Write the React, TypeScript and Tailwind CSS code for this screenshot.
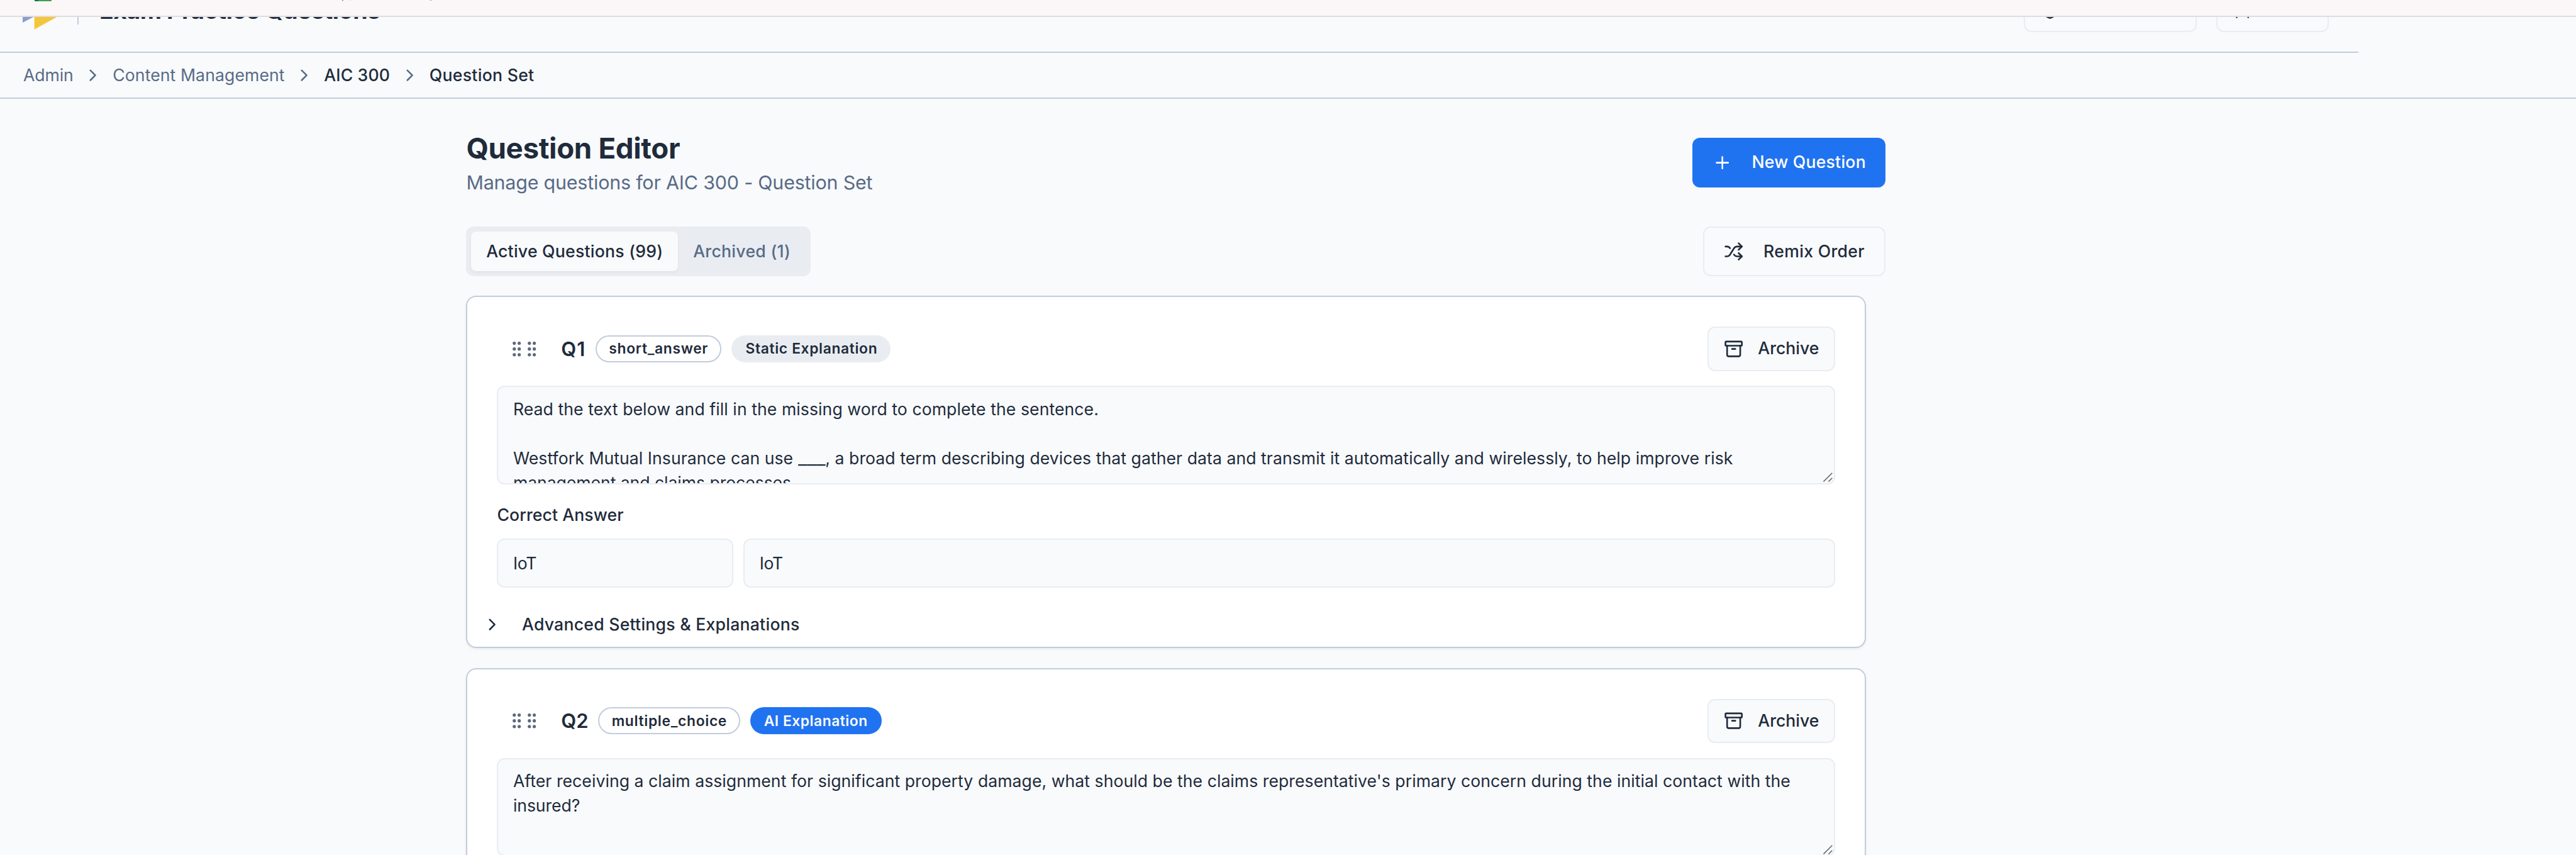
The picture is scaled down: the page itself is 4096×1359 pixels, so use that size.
import React from 'react';
import type { ReactNode } from 'react';
import { Archive, ChevronRight, GripVertical, Plus, Shield, Shuffle, User } from 'lucide-react';

const ICON = 'size-[31.3px] shrink-0';
const FIELD = 'rounded-[12px] border-2 border-[#e9ecf1] bg-[#f8fafc]';

function BrowserEdge() {
  return (
    <div className="flex h-[27px] shrink-0 items-start border-b-2 border-[#dfdcdf] bg-[#fbf7f8] pl-[55px]">
      <span className="h-[2px] w-[6px] bg-[#23713a]" />
      <span className="h-[2px] w-[20px] bg-[#37a152]" />
      <span className="h-[2px] w-px bg-[#e2574c]" />
      <span className="ml-[462px] h-px w-[2px] bg-[#6b6b6b]" />
      <span className="ml-[10px] h-px w-[5px] bg-[#ebe7e8]" />
      <span className="ml-[123px] h-px w-[2px] bg-[#e0795c]" />
    </div>
  );
}

function Header() {
  return (
    <div className="flex h-[57px] shrink-0 flex-col justify-end overflow-hidden">
      <header className="flex h-[135.2px] w-[3750px] shrink-0 items-center border-b-2 border-[#c2cddc] pr-[47px] pl-[36px]">
        <svg className="h-[62.7px] w-[76.4px]" viewBox="0 0 78 64">
          <path d="M0 11v42l40-21z" fill="#8c9dcd" />
          <path d="M19 0v64l58-32z" fill="#f4c63b" />
        </svg>
        <span className="ml-[11px] h-[47px] w-[2px] bg-[#c2cddc]" />
        <span className="mt-[2px] ml-[32.5px] text-[37.5px] leading-none font-bold tracking-[-0.42px] whitespace-nowrap">
          Exam Practice Questions
        </span>
        <div className="ml-auto flex gap-[31.3px]">
          <button className={`flex h-[70.5px] w-[274.4px] items-center pl-[23.5px] ${FIELD}`}>
            <Shield className={ICON} />
          </button>
          <button className={`flex h-[70.5px] w-[179px] items-center pl-[23.5px] ${FIELD}`}>
            <User className={ICON} />
          </button>
        </div>
      </header>
    </div>
  );
}

function Breadcrumbs() {
  return (
    <nav className="flex h-[73px] shrink-0 items-center gap-[15.7px] border-b-2 border-[#c2cddc] pl-[37px] text-[26.6px] whitespace-nowrap text-[#586b86]">
      <span className="tracking-[-0.1px]">Admin</span>
      <ChevronRight className={ICON} />
      <span className="tracking-[0.1px]">Content Management</span>
      <ChevronRight className={ICON} />
      <span className="font-medium tracking-[0.15px] text-[#1f2b3b]">AIC 300</span>
      <ChevronRight className={ICON} />
      <span className="font-medium tracking-[0.3px] text-[#1f2b3b]">Question Set</span>
    </nav>
  );
}

function PageTitle() {
  return (
    <div className="flex items-center justify-between">
      <div>
        <h1 className="-mb-px text-[45.6px] leading-[64.7px] font-bold tracking-[-0.3px]">Question Editor</h1>
        <p className="text-[30.4px] leading-[47px] tracking-[-0.18px] text-[#586b86]">
          Manage questions for AIC 300 - Question Set
        </p>
      </div>
      <button className="mb-[1px] flex h-[78.4px] w-[306.6px] items-center gap-[31.3px] rounded-[12px] bg-[#2073f0] pl-[31.3px] font-medium tracking-[0.24px] whitespace-nowrap text-white">
        <Plus className={ICON} />
        New Question
      </button>
    </div>
  );
}

function Tabs() {
  return (
    <div className="mt-[46.2px] flex items-center justify-between font-medium whitespace-nowrap">
      <div className="flex h-[78.4px] w-[547.5px] rounded-[12px] bg-[#e9edf2] p-[7.8px]">
        <button className="w-[329.1px] rounded-[8px] bg-[#f8fafc] tracking-[0.25px] shadow-[0_2px_4px_rgba(0,0,0,0.05)]">
          Active Questions (99)
        </button>
        <button className="grow tracking-[0.3px] text-[#586b86]">Archived (1)</button>
      </div>
      <button className={`flex h-[78.4px] w-[289.9px] items-center gap-[31.3px] pl-[31.3px] tracking-[0.32px] ${FIELD}`}>
        <Shuffle className={ICON} />
        Remix Order
      </button>
    </div>
  );
}

function ResizeHandle() {
  return (
    <svg className="absolute right-[1.5px] bottom-[1.5px] size-[15px]" viewBox="0 0 15 15" fill="none" stroke="#666a6c" strokeWidth="1.6">
      <path d="M0.5 14.5 14.3 0.7M8.5 14.5l5.8-5.8" />
    </svg>
  );
}

type Line = { key: string; text: ReactNode; tracking: string };

type Question = {
  label: string;
  labelClass: string;
  type: string;
  typeClass: string;
  explanation: string;
  explanationClass: string;
  lines: Line[];
};

const questions: Question[] = [
  {
    label: 'Q1',
    labelClass: 'w-[39.2px] tracking-[1px]',
    type: 'short_answer',
    typeClass: 'w-[200.3px] tracking-[0.7px]',
    explanation: 'Static Explanation',
    explanationClass: 'w-[252.7px] pl-[2px] bg-[#e9edf2] tracking-[0.65px]',
    lines: [
      {
        key: 'a',
        text: 'Read the text below and fill in the missing word to complete the sentence.',
        tracking: 'tracking-[0.08px]',
      },
      { key: 'b', text: ' ', tracking: '' },
      {
        key: 'c',
        text: (
          <>
            Westfork Mutual Insurance can use{' '}
            <span className="mr-[7.2px] inline-block origin-left scale-x-[1.2] tracking-normal">___</span>, a broad term
            describing devices that gather data and transmit it automatically and wirelessly, to help improve risk
          </>
        ),
        tracking: 'tracking-[0.06px]',
      },
      { key: 'd', text: 'management and claims processes.', tracking: 'tracking-[-0.05px]' },
    ],
  },
  {
    label: 'Q2',
    labelClass: 'w-[43.6px] tracking-[0.15px]',
    type: 'multiple_choice',
    typeClass: 'w-[225.8px] tracking-[0.69px]',
    explanation: 'AI Explanation',
    explanationClass: 'w-[208.6px] bg-[#2073f0] text-[#f8fafc] tracking-[0.53px]',
    lines: [
      {
        key: 'a',
        text: "After receiving a claim assignment for significant property damage, what should be the claims representative's primary concern during the initial contact with the",
        tracking: 'tracking-[0.053px]',
      },
      { key: 'b', text: 'insured?', tracking: 'tracking-[-0.07px]' },
    ],
  },
];

function QuestionCard({ question }: { question: Question }) {
  return (
    <section className="h-[560.2px] w-[2225.3px] shrink-0 rounded-[16px] border-2 border-[#c2cddc] bg-white shadow-[0_2px_4px_rgba(0,0,0,0.06)]">
      <div className="px-[47px] pt-[47px]">
        <div className="flex h-[70.5px] items-center">
          <div className="flex pl-[15.7px] text-[#5f697b]">
            <GripVertical className={ICON} />
            <GripVertical className={`${ICON} -ml-[7.8px]`} />
          </div>
          <span className={`ml-[31.3px] text-[31px] leading-none font-semibold whitespace-nowrap ${question.labelClass}`}>
            {question.label}
          </span>
          <span
            className={`ml-[15.7px] flex h-[43px] items-center justify-center rounded-full border-2 border-[#c2cddc] text-[22.8px] font-semibold whitespace-nowrap ${question.typeClass}`}
          >
            {question.type}
          </span>
          <span
            className={`ml-[15.7px] flex h-[43px] items-center justify-center rounded-full text-[22.8px] font-semibold whitespace-nowrap ${question.explanationClass}`}
          >
            {question.explanation}
          </span>
          <button className={`ml-auto flex h-[70.5px] w-[202.7px] items-center gap-[23.5px] pl-[23.5px] font-medium ${FIELD}`}>
            <Archive className={ICON} />
            Archive
          </button>
        </div>
        <div className={`relative mt-[23.5px] h-[156.7px] overflow-hidden px-[23.5px] pt-[15.7px] leading-[39.18px] whitespace-pre ${FIELD}`}>
          {question.lines.map((line) => (
            <p key={line.key} className={`h-[39.18px] ${line.tracking}`}>
              {line.text}
            </p>
          ))}
          <ResizeHandle />
        </div>
        <div className="flex h-[86.2px] items-center pt-[11.3px] font-medium tracking-[0.1px]">Correct Answer</div>
        <div className="flex gap-[15.7px] tracking-[-0.3px]">
          <div className={`flex h-[78.4px] w-[376.1px] items-center px-[23.5px] pt-[2px] ${FIELD}`}>IoT</div>
          <div className={`flex h-[78.4px] grow items-center px-[23.5px] pt-[2px] ${FIELD}`}>IoT</div>
        </div>
      </div>
      <button className="mt-[23.5px] flex h-[70.5px] items-center gap-[31.8px] pl-[23.5px] font-medium tracking-[0.25px]">
        <ChevronRight className={ICON} />
        Advanced Settings &amp; Explanations
      </button>
    </section>
  );
}

export default function App() {
  return (
    <div className="flex h-screen w-full flex-col overflow-hidden bg-[#f8fafc] font-['Inter',sans-serif] text-[26.6px] text-[#1f2b3b]">
      <BrowserEdge />
      <Header />
      <Breadcrumbs />
      <main className="ml-[741.4px] w-[2256.7px] pt-[46.5px]">
        <PageTitle />
        <Tabs />
        <div className="mt-[31.3px] flex flex-col gap-[31.3px]">
          {questions.map((question) => (
            <QuestionCard key={question.label} question={question} />
          ))}
        </div>
      </main>
    </div>
  );
}
